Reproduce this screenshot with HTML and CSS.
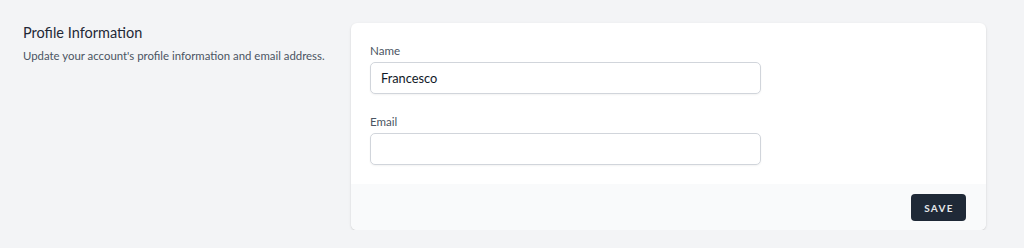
FILE: index.html
```html
<!DOCTYPE html>
<html>
<head>
<meta charset="utf-8">
<link rel="stylesheet" href="styles.css">
</head>
<body>
<div class="page">
  <div class="intro">
    <h3 class="title">Profile Information</h3>
    <p class="desc">Update your account's profile information and email address.</p>
  </div>
  <form class="card">
    <div class="fields">
      <div class="field">
        <label class="label">Name</label>
        <input class="input" type="text" value="Francesco">
      </div>
      <div class="field">
        <label class="label">Email</label>
        <input class="input" type="email" value="">
      </div>
    </div>
    <div class="actions">
      <button class="btn" type="button">Save</button>
    </div>
  </form>
</div>
</body>
</html>
```

FILE: styles.css
```css
html, body {
  margin: 0;
  background: #f3f4f6;
  font-family: "Lato", "Noto Sans", sans-serif;
}
.page {
  display: flex;
  padding: 23px 38px 0 23px;
}
.intro {
  width: 328px;
  flex: none;
}
.title {
  margin: 0;
  font-size: 14.5px;
  line-height: 20px;
  font-weight: 400;
  color: #1f2937;
}
.desc {
  margin: 4px 0 0;
  font-size: 11.4px;
  line-height: 17px;
  color: #4b5563;
}
.card {
  flex: 1;
  background: #fff;
  border-radius: 6px;
  box-shadow: 0 1px 3px rgba(0,0,0,0.1), 0 1px 2px rgba(0,0,0,0.06);
  overflow: hidden;
}
.fields {
  padding: 19px;
  display: flex;
  flex-direction: column;
  gap: 19px;
}
.field {
  display: flex;
  flex-direction: column;
}
.label {
  font-size: 11.6px;
  line-height: 17px;
  color: #4b5563;
  margin-bottom: 3px;
}
.input {
  width: 391px;
  height: 32px;
  box-sizing: border-box;
  border: 1px solid #d1d5db;
  border-radius: 5px;
  box-shadow: 0 1px 2px rgba(0,0,0,0.05);
  padding: 0 10px;
  font-family: inherit;
  font-size: 12.8px;
  color: #111827;
  background: #fff;
  outline: none;
}
.actions {
  background: #f9fafb;
  display: flex;
  justify-content: flex-end;
  padding: 10px 20px 9px;
}
.btn {
  width: 55px;
  height: 27px;
  border: none;
  border-radius: 4px;
  background: #1f2937;
  color: #e5e7eb;
  font-family: inherit;
  font-size: 10px;
  font-weight: 700;
  letter-spacing: 0.13em;
  text-transform: uppercase;
  padding: 0 0 0 1px;
}
```
